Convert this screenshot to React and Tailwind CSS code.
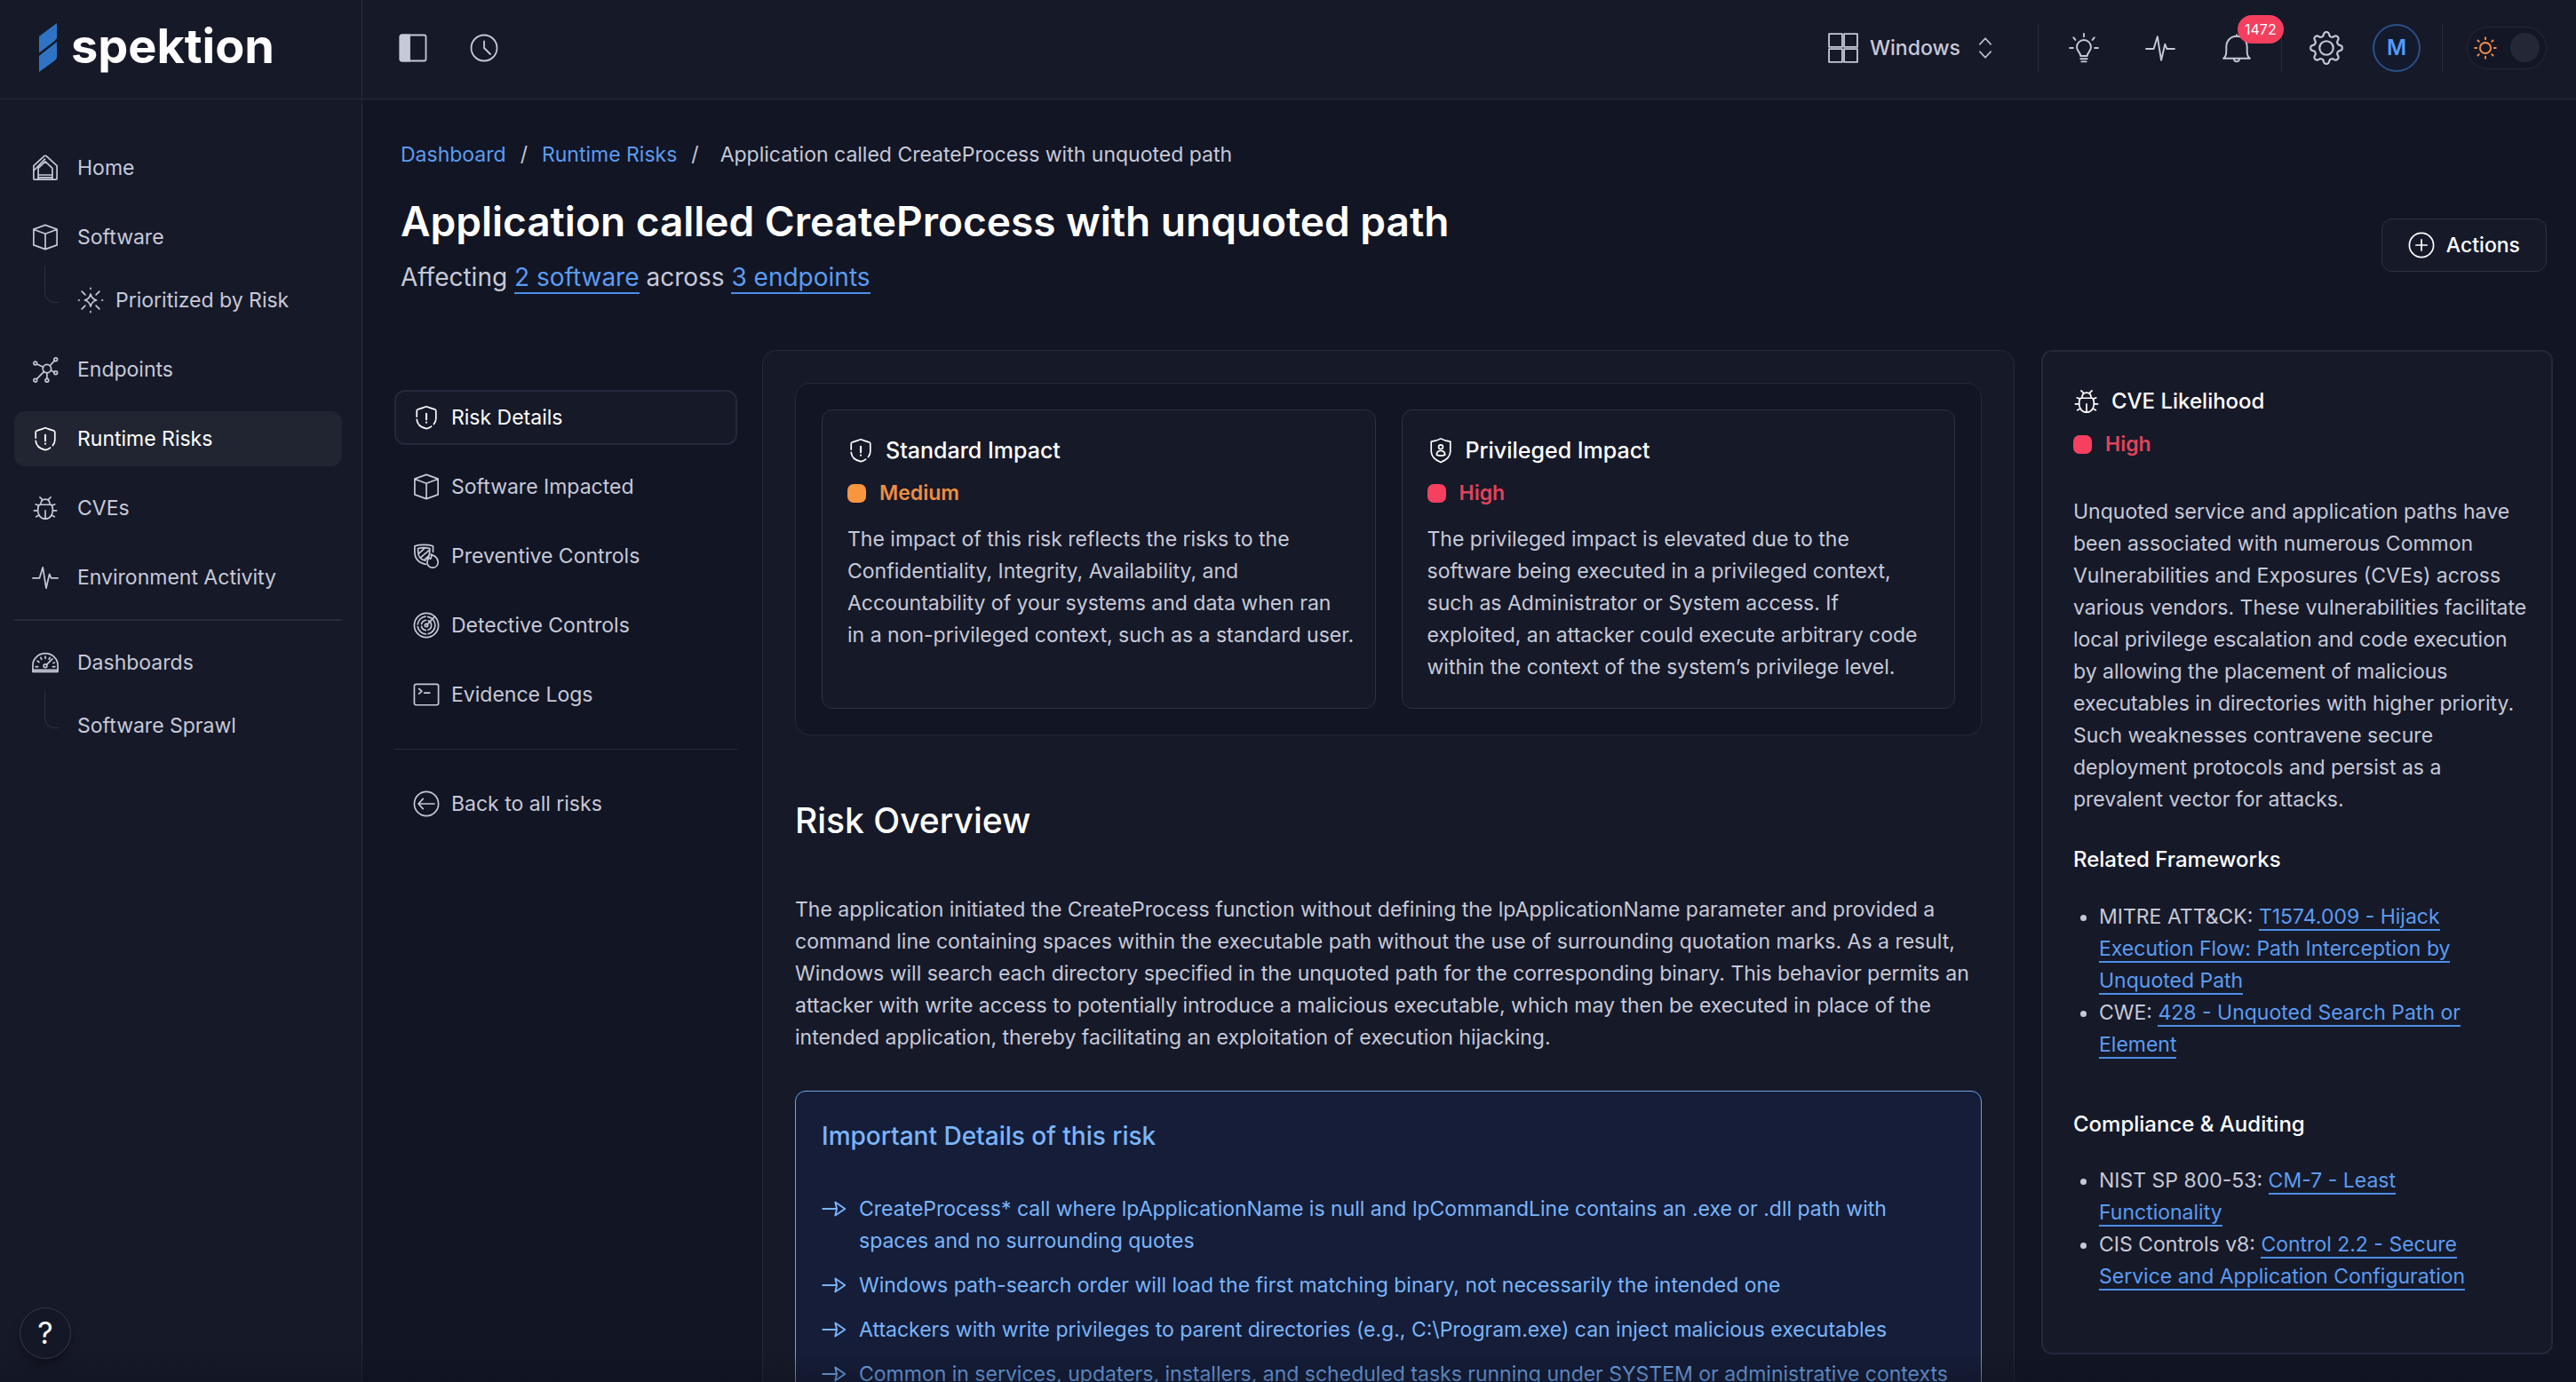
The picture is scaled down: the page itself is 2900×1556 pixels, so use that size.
import { useState } from "react";
import clsx from "clsx";

function Icon({ size = "size-8", stroke = 1.8, className, children }) {
  return (
    <svg
      viewBox="0 0 32 32"
      fill="none"
      stroke="currentColor"
      strokeWidth={stroke}
      strokeLinecap="round"
      strokeLinejoin="round"
      aria-hidden="true"
      className={clsx(size, "shrink-0", className)}
    >
      {children}
    </svg>
  );
}

function HomeIcon(props) {
  return (
    <Icon {...props}>
      <path d="M2 29V13.5L14.500 2a2 2 0 0 1 3 0L30 13.5V29a1 1 0 0 1-1 1H3a1 1 0 0 1-1-1Z" />
      <path d="M2 19.500 15.500 5.500M7.500 30V16.500L16 8.500l8.500 8V30M7.500 24.500h17M7.500 27.500h17" />
    </Icon>
  );
}

function BoxIcon(props) {
  return (
    <Icon {...props}>
      <path d="M16 1.500 30 6.500V25.500L16 30.500 2 25.500V6.500ZM2.500 7 16 12l13.500-5M16 12v18" />
    </Icon>
  );
}

function SparkIcon(props) {
  return (
    <Icon {...props}>
      <path d="M16 8.500c1 4.500 3 6.500 7 7.500-4 1-6 3-7 7.500-1-4.500-3-6.500-7-7.500 4-1 6-3 7-7.500Z" />
      <path d="M16 1.500v1M16 29.500v1M1.500 16h1M29.500 16h1M5.500 5.500l4 4M26.500 5.500l-4 4M5.500 26.500l4-4M26.500 26.500l-4-4" />
    </Icon>
  );
}

function NetworkIcon(props) {
  return (
    <Icon {...props}>
      <circle cx="18" cy="15" r="5" />
      <circle cx="4" cy="8.500" r="2" />
      <circle cx="28.500" cy="4" r="2" />
      <circle cx="28.500" cy="20" r="2" />
      <circle cx="4" cy="29" r="2" />
      <circle cx="18" cy="29" r="2" />
      <path d="m6 9.500 7.500 3.500M27 5.500l-5.500 6M26.500 19.500 23 17M14.500 18.500l-9 9M18 20v7" />
    </Icon>
  );
}

function ShieldAlertIcon(props) {
  return (
    <Icon {...props}>
      <path d="M4.500 15V8c0-1 .5-1.500 1.500-1.800C9.500 5.500 12.500 4 16 3c3.500 1 6.500 2.500 10 3.200 1 .3 1.500.8 1.500 1.800v9.500c0 2.500-1 4.500-2.500 6.500" />
      <path d="M4.500 18.500c.5 5.500 5 9.500 11.500 11 2.500-.5 4.500-1.500 6-2.700" />
      <path d="M16 11.500v7M16 21.800v.4" strokeWidth="2.200" />
    </Icon>
  );
}

function ShieldUserIcon(props) {
  return (
    <Icon {...props}>
      <path d="M16 2c3.500 2 7 3 11.500 3.500V17c0 6-4.500 10.500-11.500 13.500C9 27.500 4.500 23 4.500 17V5.500C9 5 12.500 4 16 2Z" />
      <circle cx="16" cy="12" r="2.600" />
      <path d="M11 21.500c0-3.500 2-5 5-5s5 1.500 5 5c-3 1.200-7 1.200-10 0Z" />
    </Icon>
  );
}

function BugIcon(props) {
  return (
    <Icon {...props}>
      <path d="M8.500 12h15c1 2 1.500 4 1.500 6.500 0 6-3.500 10.500-9 10.500s-9-4.500-9-10.500C7 16 7.500 14 8.500 12Z" />
      <path d="M10.500 12c0-4 2-6.500 5.500-6.500s5.500 2.500 5.500 6.500M12.500 6 9.500 3M19.500 6l3-3M8 13 4.500 11.500M24 13l3.500-1.500M7 19H2.500M25 19h4.500M8.500 24.500 5 26.500M23.500 24.500l3.500 2M16 19v9.500" />
    </Icon>
  );
}

function PulseIcon(props) {
  return (
    <Icon {...props}>
      <path d="M1 17h8l4-13 4 25 4-17 2 5h8" />
    </Icon>
  );
}

function GaugeIcon(props) {
  return (
    <Icon {...props}>
      <path d="M1 27V19a15 14 0 0 1 30 0v8ZM1 25h30" />
      <circle cx="16" cy="20" r="2" />
      <path d="m17.500 18.500 7-7M16 8.500V11M10.500 10l1 2M21.500 10l-1 2M6.500 14l2 1.500M4.500 21H7M27.500 21H25M27 16l-1.500.5" />
    </Icon>
  );
}

function ShieldFireIcon(props) {
  return (
    <Icon {...props}>
      <path d="M15.500 26C7 24.500 2 19 2 11V4C8 2 18 2 24 4v7" />
      <path d="M15 21.500C9 20.500 6 16 6 11V7c4-1.200 10-1.200 14 0v4c0 3-1 6-3 8.500M6.500 13.500 14 6.500M9 18 20 8.500M14 20.500l4-4" />
      <path d="M21.500 14c1 2 .5 4-.5 5.500-.8-.3-1.200-1-1.500-1.500-1.500 1.500-2.500 3.500-2.500 6 0 3.500 3 6 6.500 6s6.500-2.500 6.500-6.500c0-4.500-4-8-8.500-9.500Z" />
    </Icon>
  );
}

function RadarIcon(props) {
  return (
    <Icon {...props}>
      <circle cx="16" cy="16" r="14.500" />
      <circle cx="16" cy="16" r="10.500" strokeDasharray="14 3" />
      <circle cx="16" cy="16" r="6" strokeDasharray="7 3" />
      <circle cx="16" cy="16" r="1.800" />
      <path d="M17 15 26 5.500" />
    </Icon>
  );
}

function TerminalIcon(props) {
  return (
    <Icon {...props}>
      <rect x="1.500" y="3.500" width="29" height="25" rx="2" />
      <path d="m7 9 3.500 3L7 15M13.500 14H20" />
    </Icon>
  );
}

function BackIcon(props) {
  return (
    <Icon {...props}>
      <circle cx="16" cy="16" r="14.500" />
      <path d="M25.500 16h-19M12 10l-5.500 6 5.500 6" />
    </Icon>
  );
}

function PlusCircleIcon(props) {
  return (
    <Icon {...props}>
      <circle cx="16" cy="16" r="14.500" />
      <path d="M16 9.500v13M9.500 16h13" />
    </Icon>
  );
}

function PanelIcon(props) {
  return (
    <Icon {...props}>
      <rect x="1.500" y="1.500" width="29" height="29" rx="2" />
      <path d="M3 1.500h9v29H3a1.500 1.500 0 0 1-1.500-1.500V3A1.500 1.500 0 0 1 3 1.500Z" fill="currentColor" />
    </Icon>
  );
}

function ClockIcon(props) {
  return (
    <Icon {...props}>
      <circle cx="16" cy="16" r="14.500" />
      <path d="M16 8.500V16l7 7" />
    </Icon>
  );
}

function WindowsIcon(props) {
  return (
    <Icon {...props} stroke={1.700}>
      <path d="M1 1h14v14H1ZM17 1h14v14H17ZM1 17h14v14H1ZM17 17h14v14H17Z" />
    </Icon>
  );
}

function UpDownIcon(props) {
  return (
    <Icon {...props}>
      <path d="m9.500 11.500 6.500-7 6.500 7M9.500 20.500l6.500 7 6.500-7" />
    </Icon>
  );
}

function BulbIcon(props) {
  return (
    <Icon {...props}>
      <path d="M12.500 24.500c0-3.500-4-5-4-9.500a7.500 7.500 0 0 1 15 0c0 4.500-4 6-4 9.500Z" />
      <path d="M12.500 27.500h7M13.500 30.500h5M16 1v3M5 5l2 2.500M27 5l-2 2.500M1 16h3.500M27.500 16H31" />
    </Icon>
  );
}

function BellIcon(props) {
  return (
    <Icon {...props}>
      <path d="M2 27c2.500-1.500 3-4 3-8v-4C5 8.500 9.500 3.500 16 3.500S27 8.500 27 15v4c0 4 .5 6.500 3 8ZM13 27.500c.3 2 1.500 3 3 3s2.700-1 3-3M16 3.500V2" />
    </Icon>
  );
}

function GearIcon(props) {
  // eight rounded teeth around the rim
  const points = Array.from({ length: 96 }, (_, i) => {
    const a = (i / 96) * Math.PI * 2;
    const r = 13.2 + 1.9 * Math.tanh(1.8 * Math.cos(8 * a));
    return `${(16 + r * Math.cos(a)).toFixed(2)} ${(16 + r * Math.sin(a)).toFixed(2)}`;
  });
  return (
    <Icon {...props}>
      <path d={`M${points.join("L")}Z`} />
      <circle cx="16" cy="16" r="6.500" />
    </Icon>
  );
}

function SunIcon(props) {
  return (
    <Icon {...props} stroke={2.400}>
      <circle cx="16" cy="16" r="7.500" />
      <path d="M16 1.500v2.500M16 28v2.500M1.500 16H4M28 16h2.500M5.500 5.500l1.500 1.500M26.500 5.500 25 7M5.500 26.500 7 25M26.500 26.500 25 25" />
    </Icon>
  );
}

function ArrowIcon(props) {
  return (
    <Icon {...props} stroke={2.200}>
      <path d="M1.500 16H18M17.500 7.500 30 16l-12.500 8.500L19.500 16Z" />
    </Icon>
  );
}

function Logo() {
  return (
    <a href="#" className="flex items-center gap-4 text-white">
      <svg viewBox="0 0 20 55" className="h-[55px] w-5 shrink-0" fill="#2f74c4" aria-hidden="true">
        <path d="M0 15 20 0v17L17 20.500 0 33.500Z" />
        <path d="M0 37 17 23.500 20 21v18L18 42 0 55Z" />
      </svg>
      <span className="pb-1 text-[54px] leading-[56px] font-bold">spektion</span>
    </a>
  );
}

function NavRow({ icon: RowIcon, label, active }) {
  return (
    <a
      href="#"
      className={clsx(
        "flex h-[62px] items-center gap-[21px] rounded-xl px-5",
        active ? "bg-[#212531] text-white" : "text-[#c6c9d8]"
      )}
    >
      <RowIcon size="size-[30px]" />
      {label}
    </a>
  );
}

function SubNav({ children }) {
  return (
    <div className="flex items-start pl-[34px]">
      <span className="mt-px h-[42px] w-4 rounded-bl-xl border-b border-l border-[#2c3042]" />
      {children}
    </div>
  );
}

function Sidebar() {
  return (
    <aside className="flex w-[408px] shrink-0 flex-col border-r border-[#262a3a] bg-[#161928]">
      <div className="flex h-28 shrink-0 items-center border-b border-[#262a3a] px-11 pb-1">
        <Logo />
      </div>
      <nav className="flex flex-1 flex-col gap-4 pt-[46px] pr-[22px] pl-4">
        <NavRow icon={HomeIcon} label="Home" />
        <div>
          <NavRow icon={BoxIcon} label="Software" />
          <SubNav>
            <a href="#" className="mt-[9px] ml-[21px] flex h-[62px] items-center gap-[13px] text-[#c6c9d8]">
              <SparkIcon size="size-[30px]" />
              Prioritized by Risk
            </a>
          </SubNav>
        </div>
        <NavRow icon={NetworkIcon} label="Endpoints" />
        <NavRow icon={ShieldAlertIcon} label="Runtime Risks" active />
        <NavRow icon={BugIcon} label="CVEs" />
        <NavRow icon={PulseIcon} label="Environment Activity" />
        <hr className="border-t-2 border-[#262a3a]" />
        <div>
          <NavRow icon={GaugeIcon} label="Dashboards" />
          <SubNav>
            <a href="#" className="mt-[9px] ml-[21px] flex h-[62px] items-center text-[#c6c9d8]">
              Software Sprawl
            </a>
          </SubNav>
        </div>
      </nav>
      <div className="px-[22px] pb-[26px]">
        <button
          type="button"
          aria-label="Help"
          className="flex size-[58px] items-center justify-center rounded-full border border-[#343849] bg-[#141726] text-[34px] text-white shadow-lg shadow-black/30"
        >
          ?
        </button>
      </div>
    </aside>
  );
}

function Separator() {
  return <span className="h-14 w-px bg-[#262a3a]" />;
}

function Header() {
  const [light, setLight] = useState(false);
  return (
    <header className="flex h-28 shrink-0 items-center border-b border-[#262a3a] bg-[#161928] pr-[33px] pb-1 pl-[41px] text-[#c6c9d8]">
      <div className="flex items-center gap-12">
        <button type="button" aria-label="Toggle sidebar"><PanelIcon /></button>
        <button type="button" aria-label="History"><ClockIcon /></button>
      </div>
      <div className="ml-auto flex items-center">
        <label className="flex items-center gap-[13px] font-medium">
          <WindowsIcon size="size-[34px]" />
          <select aria-label="Platform" className="appearance-none bg-transparent">
            <option>Windows</option>
          </select>
          <UpDownIcon size="size-[30px]" />
        </label>
        <div className="ml-11 flex items-center"><Separator /></div>
        <button type="button" aria-label="Insights" className="ml-[34px]"><BulbIcon size="size-[34px]" /></button>
        <button type="button" aria-label="Activity" className="ml-[52px]"><PulseIcon size="size-[34px]" /></button>
        <button type="button" aria-label="Notifications" className="relative ml-[52px]">
          <BellIcon size="size-[34px]" />
          <span className="absolute -top-5 left-[18px] z-10 flex h-8 items-center rounded-full bg-[#f43f5e] px-2 text-base text-white">
            1472
          </span>
        </button>
        <div className="ml-[33px] flex items-center"><Separator /></div>
        <button type="button" aria-label="Settings" className="ml-[31px]"><GearIcon size="size-[38px]" /></button>
        <button
          type="button"
          aria-label="Account"
          className="ml-[33px] flex size-[54px] items-center justify-center rounded-full border-2 border-[#2b4f86] bg-[#121a2c] text-2xl font-semibold text-[#559cf8]"
        >
          M
        </button>
        <div className="ml-6 flex items-center"><Separator /></div>
        <label className="relative ml-[27px] flex h-12 w-[90px] items-center justify-between rounded-full border border-[#242838] bg-[#131625] px-[7px]">
          <input
            type="checkbox"
            role="switch"
            aria-label="Light theme"
            className="sr-only"
            checked={light}
            onChange={(e) => setLight(e.target.checked)}
          />
          <SunIcon size="size-[26px]" className="text-[#f08c4a]" />
          <span className="size-[33px] rounded-full bg-[#242836]" />
        </label>
      </div>
    </header>
  );
}

const sections = [
  { label: "Risk Details", icon: ShieldAlertIcon, active: true },
  { label: "Software Impacted", icon: BoxIcon },
  { label: "Preventive Controls", icon: ShieldFireIcon },
  { label: "Detective Controls", icon: RadarIcon },
  { label: "Evidence Logs", icon: TerminalIcon },
];

function SectionMenu() {
  return (
    <nav className="flex w-[386px] shrink-0 flex-col pt-[45px]">
      <div className="flex flex-col gap-4">
        {sections.map(({ label, icon: RowIcon, active }) => (
          <a
            key={label}
            href="#"
            className={clsx(
              "flex h-[62px] items-center gap-[13px] rounded-xl border-2 px-[19px]",
              active ? "border-[#24283a] bg-[#161928] text-white" : "border-transparent text-[#c6c9d8]"
            )}
          >
            <RowIcon size="size-[30px]" />
            {label}
          </a>
        ))}
      </div>
      <hr className="mt-[30px] border-[#262a3a]" />
      <a href="#" className="mt-[30px] flex h-[62px] items-center gap-[13px] px-[21px] text-[#c6c9d8]">
        <BackIcon size="size-[30px]" />
        Back to all risks
      </a>
    </nav>
  );
}

const levels = {
  Medium: { swatch: "bg-[#f8963f]", text: "text-[#ee8d42]" },
  High: { swatch: "bg-[#f7405f]", text: "text-[#e0435c]" },
};

function Level({ value }) {
  return (
    <p className={clsx("flex items-center gap-[15px] font-semibold", levels[value].text)}>
      <span className={clsx("size-[21px] rounded-[7px]", levels[value].swatch)} />
      {value}
    </p>
  );
}

function ImpactCard({ icon: TitleIcon, title, level, children }) {
  return (
    <section className="flex-1 rounded-xl border border-[#2c3042] bg-[#161928] pt-[27px] pr-5 pb-7 pl-7">
      <h3 className="flex items-center gap-[13px] text-[25px] leading-9 font-medium text-white">
        <TitleIcon size="size-[30px]" />
        {title}
      </h3>
      <div className="mt-3">
        <Level value={level} />
      </div>
      <p className="mt-4">{children}</p>
    </section>
  );
}

const details = [
  "CreateProcess* call where lpApplicationName is null and lpCommandLine contains an .exe or .dll path with spaces and no surrounding quotes",
  "Windows path-search order will load the first matching binary, not necessarily the intended one",
  "Attackers with write privileges to parent directories (e.g., C:\\Program.exe) can inject malicious executables",
  "Common in services, updaters, installers, and scheduled tasks running under SYSTEM or administrative contexts",
];

function RiskDetails() {
  return (
    <article className="min-w-0 flex-1 rounded-2xl border border-[#24283a] bg-[#161928] p-9">
      <div className="flex gap-[29px] rounded-2xl border border-[#24283a] bg-[#121524] p-[29px]">
        <ImpactCard icon={ShieldAlertIcon} title="Standard Impact" level="Medium">
          The impact of this risk reflects the risks to the Confidentiality, Integrity, Availability, and
          Accountability of your systems and data when ran in&nbsp;a non-privileged context, such as a standard user.
        </ImpactCard>
        <ImpactCard icon={ShieldUserIcon} title="Privileged Impact" level="High">
          The privileged impact is elevated due to the software being executed in a privileged context, such as
          Administrator or System access. If exploited, an attacker could execute arbitrary code within the context
          of the system’s privilege level.
        </ImpactCard>
      </div>
      <h2 className="mt-[72px] text-[39px] leading-[48px] font-medium text-white">Risk Overview</h2>
      <p className="mt-[58px]">
        The application initiated the CreateProcess function without defining the lpApplicationName parameter and
        provided a command line containing spaces within the executable path without the use of surrounding
        quotation marks. As a result, Windows will search each directory specified in the unquoted path for the
        corresponding binary. This behavior permits an attacker with write access to potentially introduce a
        malicious executable, which may then be executed in place of the intended application, thereby
        facilitating an exploitation of execution hijacking.
      </p>
      <section className="mt-[42px] rounded-xl border border-[#6ba4ea] bg-[#151d38] px-[29px] pt-8 pb-7 text-[#7ab5fb]">
        <h3 className="text-[28px] leading-9 font-medium">Important Details of this risk</h3>
        <ul className="mt-[46px] flex flex-col gap-[14px]">
          {details.map((d) => (
            <li key={d} className="flex gap-[14px]">
              <ArrowIcon size="size-7" className="mt-1" />
              <span>{d}</span>
            </li>
          ))}
        </ul>
      </section>
    </article>
  );
}

function TextLink({ children }) {
  return (
    <a href="#" className="border-b-2 border-[#4a8fe8] text-[#5b9cf2]">
      {children}
    </a>
  );
}

function CvePanel() {
  return (
    <aside className="w-[576px] shrink-0 self-start rounded-xl border-2 border-[#24283a] bg-[#161928] pt-[38px] pr-6 pb-[68px] pl-[34px]">
      <h2 className="flex items-center gap-[13px] text-2xl leading-9 font-medium text-white">
        <BugIcon size="size-[30px]" />
        CVE Likelihood
      </h2>
      <div className="mt-3">
        <Level value="High" />
      </div>
      <p className="mt-10">
        Unquoted service and application paths have been associated with numerous Common Vulnerabilities and
        Exposures (CVEs) across various vendors. These vulnerabilities facilitate local privilege escalation and
        code execution by&nbsp;allowing the placement of malicious executables in directories with higher priority.
        Such weaknesses contravene secure deployment protocols and persist as a prevalent vector for attacks.
      </p>
      <h3 className="mt-8 text-2xl leading-9 font-medium text-white">Related Frameworks</h3>
      <ul className="mt-7 list-disc pr-[10px] pl-[29px]">
        <li>
          MITRE ATT&amp;CK: <TextLink>T1574.009 - Hijack Execution Flow: Path Interception by Unquoted Path</TextLink>
        </li>
        <li>
          CWE: <TextLink>428 - Unquoted Search Path or Element</TextLink>
        </li>
      </ul>
      <h3 className="mt-[54px] text-2xl leading-9 font-medium text-white">Compliance &amp; Auditing</h3>
      <ul className="mt-[27px] list-disc pr-[10px] pl-[29px]">
        <li>
          NIST SP 800-53: <TextLink>CM-7 - Least Functionality</TextLink>
        </li>
        <li>
          CIS Controls v8: <TextLink>Control 2.2 - Secure Service and Application Configuration</TextLink>
        </li>
      </ul>
    </aside>
  );
}

export default function App() {
  return (
    <div className="relative flex h-screen overflow-hidden bg-[#121524] font-['Inter',sans-serif] text-[23px] leading-9 text-[#c6c9d8]">
      <Sidebar />
      <div className="flex min-w-0 flex-1 flex-col">
        <Header />
        <main className="min-h-0 flex-1 overflow-hidden pt-11 pr-[26px] pl-9">
          <nav aria-label="Breadcrumb" className="flex gap-4 pl-[7px]">
            <a href="#" className="text-[#5b9cf2]">Dashboard</a>
            <span>/</span>
            <a href="#" className="text-[#5b9cf2]">Runtime Risks</a>
            <span>/</span>
            <span className="pl-2">Application called CreateProcess with unquoted path</span>
          </nav>
          <div className="mt-7 flex items-center justify-between px-[7px]">
            <div>
              <h1 className="text-[46px] leading-[58px] font-semibold text-white">
                Application called CreateProcess with unquoted path
              </h1>
              <p className="mt-[14px] text-[28px] leading-10">
                Affecting <TextLink>2 software</TextLink> across <TextLink>3 endpoints</TextLink>
              </p>
            </div>
            <button
              type="button"
              className="flex h-[60px] items-center gap-[13px] rounded-xl border border-[#2c3042] bg-[#161928] px-[29px] font-medium text-white"
            >
              <PlusCircleIcon size="size-[30px]" />
              Actions
            </button>
          </div>
          <div className="mt-[62px] flex">
            <SectionMenu />
            <div className="ml-7 flex min-w-0 flex-1 gap-[30px]">
              <RiskDetails />
              <CvePanel />
            </div>
          </div>
        </main>
      </div>
      <div className="pointer-events-none absolute inset-x-0 bottom-0 h-9 bg-linear-to-t from-[#0e1120]/40 to-transparent" />
    </div>
  );
}
